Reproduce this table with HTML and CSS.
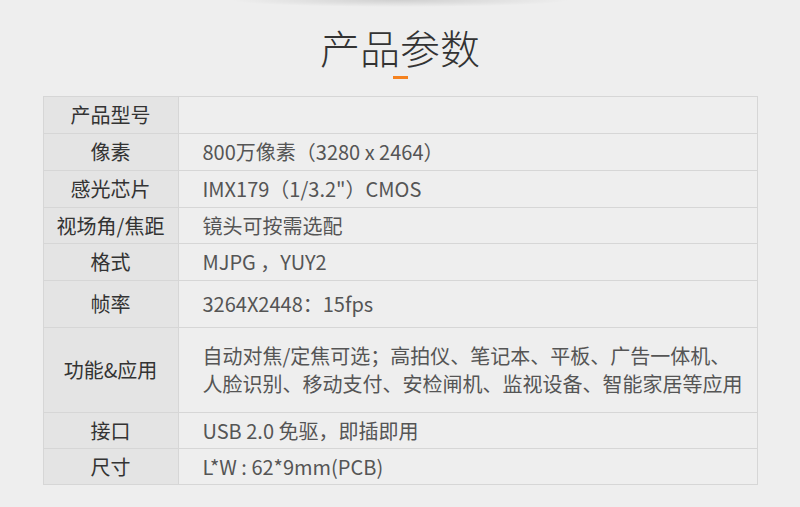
FILE: index.html
```html
<!DOCTYPE html>
<html lang="zh-CN">
<head>
  <meta charset="UTF-8">
  <meta name="viewport" content="width=device-width, initial-scale=1.0">
  <title>产品参数</title>
  <link rel="stylesheet" href="styles.css">
</head>
<body>
  <!-- Title -->
  <header class="title-block">
    <h1>产品参数</h1>
    <div class="title-bar"></div>
  </header>

  <!-- Spec table -->
  <table class="spec-table">
    <tr class="row-a">
      <th>产品型号</th>
      <td></td>
    </tr>
    <tr class="row-a">
      <th>像素</th>
      <td>800万像素（3280 x 2464）</td>
    </tr>
    <tr class="row-a">
      <th>感光芯片</th>
      <td>IMX179（1/3.2"）CMOS</td>
    </tr>
    <tr class="row-b">
      <th>视场角/焦距</th>
      <td>镜头可按需选配</td>
    </tr>
    <tr class="row-a">
      <th>格式</th>
      <td>MJPG ，YUY2</td>
    </tr>
    <tr class="row-c">
      <th>帧率</th>
      <td>3264X2448：15fps</td>
    </tr>
    <tr class="row-d">
      <th>功能&amp;应用</th>
      <td>自动对焦/定焦可选；高拍仪、笔记本、平板、广告一体机、<br>人脸识别、移动支付、安检闸机、监视设备、智能家居等应用</td>
    </tr>
    <tr class="row-b">
      <th>接口</th>
      <td>USB 2.0 免驱，即插即用</td>
    </tr>
    <tr class="row-b">
      <th>尺寸</th>
      <td>L*W : 62*9mm(PCB)</td>
    </tr>
  </table>
</body>
</html>
```

FILE: styles.css
```css
:root {
  --page-bg: #eeeeee;
  --head-bg: #e4e4e4;
  --line: #d6d6d6;
  --title: #333333;
  --label: #333333;
  --value: #555555;
  --accent: #f5821f;
}

body {
  margin: 0;
  font-family: "Noto Sans CJK SC", "Noto Sans", sans-serif;
  background-color: var(--page-bg);
  background-image: radial-gradient(ellipse 170px 7px at 50% 0, rgba(0, 0, 0, 0.13), rgba(0, 0, 0, 0));
  background-repeat: no-repeat;
}

.title-block {
  display: flex;
  flex-direction: column;
  align-items: center;
  padding-top: 25px;
}

.title-block h1 {
  margin: 0;
  font-size: 40px;
  line-height: 44px;
  font-weight: 300;
  color: var(--title);
}

.title-bar {
  width: 15px;
  height: 3px;
  margin-top: 7px;
  background: var(--accent);
}

.spec-table {
  width: 715px;
  margin: 17px auto 0;
  border-collapse: collapse;
  font-size: 20px;
}

.spec-table th,
.spec-table td {
  border: 1px solid var(--line);
  padding: 0;
  line-height: 28px;
}

.spec-table th {
  width: 134px;
  background: var(--head-bg);
  color: var(--label);
  font-weight: 400;
  text-align: center;
}

.spec-table td {
  padding-left: 24px;
  color: var(--value);
  text-align: left;
}

.row-a { height: 37px; }
.row-b { height: 36px; }
.row-c { height: 47px; }
.row-d { height: 85px; }
```
